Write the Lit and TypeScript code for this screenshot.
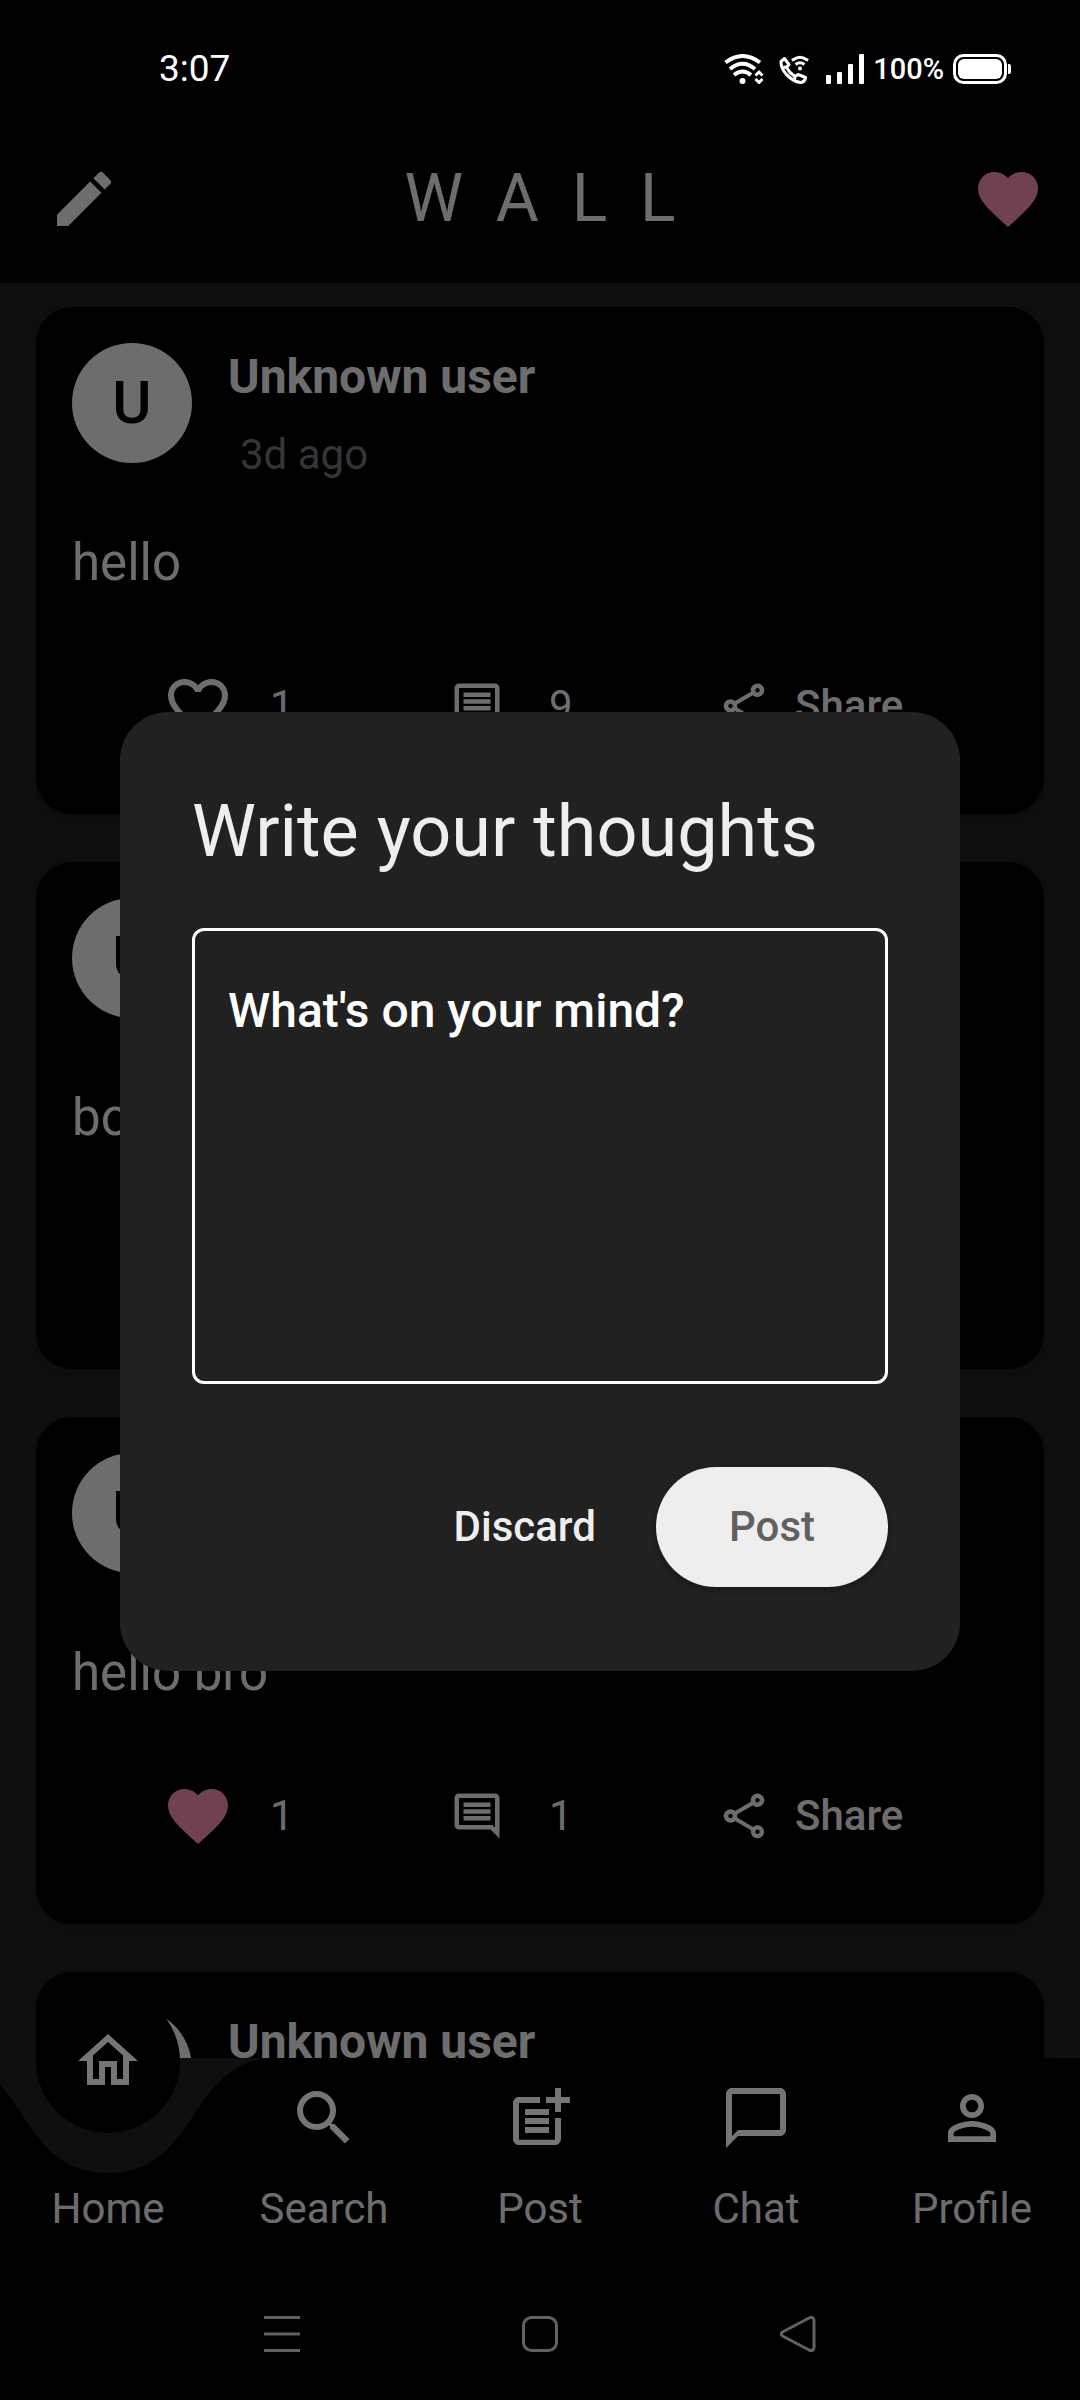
import { LitElement, html, css, svg, nothing } from "lit";
import { customElement, property } from "lit/decorators.js";

const glyphs: Record<string, string> = {
  edit: "M3 17.25V21h3.75L17.81 9.94l-3.75-3.75L3 17.25zM20.71 7.04a1 1 0 0 0 0-1.41l-2.34-2.34a1 1 0 0 0-1.41 0l-1.83 1.83 3.75 3.75 1.83-1.83z",
  heart:
    "M12 21.35l-1.45-1.32C5.4 15.36 2 12.28 2 8.5 2 5.42 4.42 3 7.5 3c1.74 0 3.41.81 4.5 2.09C13.09 3.81 14.76 3 16.5 3 19.58 3 22 5.42 22 8.5c0 3.78-3.4 6.86-8.55 11.54L12 21.35z",
  heartOutline:
    "M16.5 3c-1.74 0-3.41.81-4.5 2.09C10.91 3.81 9.24 3 7.5 3 4.42 3 2 5.42 2 8.5c0 3.78 3.4 6.86 8.55 11.54L12 21.35l1.45-1.32C18.6 15.36 22 12.28 22 8.5 22 5.42 19.58 3 16.5 3zm-4.4 15.55l-.1.1-.1-.1C7.14 14.24 4 11.39 4 8.5 4 6.5 5.5 5 7.5 5c1.54 0 3.04.99 3.57 2.36h1.87C13.46 5.99 14.96 5 16.5 5c2 0 3.5 1.5 3.5 3.5 0 2.89-3.14 5.74-7.9 10.05z",
  comment:
    "M21.99 4c0-1.1-.89-2-1.99-2H4c-1.1 0-2 .9-2 2v12c0 1.1.9 2 2 2h14l4 4-.01-18zM20 4v13.17L18.83 16H4V4h16zM6 12h12v2H6zm0-3h12v2H6zm0-3h12v2H6z",
  share:
    "M18 16.08c-.76 0-1.44.3-1.96.77L8.91 12.7c.05-.23.09-.46.09-.7s-.04-.47-.09-.7l7.05-4.11c.54.5 1.25.81 2.04.81 1.66 0 3-1.34 3-3s-1.34-3-3-3-3 1.34-3 3c0 .24.04.47.09.7L8.04 9.81C7.5 9.31 6.79 9 6 9c-1.66 0-3 1.34-3 3s1.34 3 3 3c.79 0 1.5-.31 2.04-.81l7.12 4.16c-.05.21-.08.43-.08.65 0 1.61 1.31 2.92 2.92 2.92s2.92-1.31 2.92-2.92-1.31-2.92-2.92-2.92zM18 4c.55 0 1 .45 1 1s-.45 1-1 1-1-.45-1-1 .45-1 1-1zM6 13c-.55 0-1-.45-1-1s.45-1 1-1 1 .45 1 1-.45 1-1 1zm12 7.02c-.55 0-1-.45-1-1s.45-1 1-1 1 .45 1 1-.45 1-1 1z",
  home: "M12 5.69l5 4.5V18h-2v-6H9v6H7v-7.81l5-4.5M12 3L2 12h3v8h6v-6h2v6h6v-8h3L12 3z",
  search:
    "M15.5 14h-.79l-.28-.27A6.471 6.471 0 0 0 16 9.5 6.5 6.5 0 1 0 9.5 16c1.61 0 3.09-.59 4.23-1.57l.27.28v.79l5 4.99L20.49 19l-4.99-5zm-6 0C7.01 14 5 11.99 5 9.5S7.01 5 9.5 5 14 7.01 14 9.5 11.99 14 9.5 14z",
  post: "M17 19.22H5V7h7V5H5c-1.1 0-2 .9-2 2v12c0 1.1.9 2 2 2h12c1.1 0 2-.9 2-2v-7h-2v7.22zM19 2h-2v3h-3c.01.01 0 2 0 2h3v2.99c.01.01 2 0 2 0V7h3V5h-3V2zM7 9h8v2H7zM7 12v2h8v-2h-3zM7 15h8v2H7z",
  chat: "M20 2H4c-1.1 0-2 .9-2 2v18l4-4h14c1.1 0 2-.9 2-2V4c0-1.1-.9-2-2-2zm0 14H6l-2 2V4h16v12z",
  profile:
    "M12 5.9a2.1 2.1 0 1 1 0 4.2 2.1 2.1 0 0 1 0-4.2m0 9c2.97 0 6.1 1.46 6.1 2.1v1.1H5.9V17c0-.64 3.13-2.1 6.1-2.1M12 4C9.79 4 8 5.79 8 8s1.79 4 4 4 4-1.79 4-4-1.79-4-4-4zm0 9c-2.67 0-8 1.34-8 4v3h16v-3c0-2.66-5.33-4-8-4z",
};

const icon = (name: string, cls = "") => html`
  <svg class="icon ${cls}" viewBox="0 0 24 24" aria-hidden="true">${svg`<path d=${glyphs[name]}></path>`}</svg>
`;

const shared = css`
  :host {
    font-family: Roboto, "Liberation Sans", sans-serif;
    color: #eeeeee;
  }
  * {
    box-sizing: border-box;
  }
  button,
  textarea {
    font: inherit;
    color: inherit;
    background: none;
    border: 0;
    padding: 0;
    margin: 0;
  }
  .icon {
    display: block;
    width: 72px;
    height: 72px;
    fill: currentColor;
    flex: none;
  }
  .small {
    width: 54px;
    height: 54px;
  }
  .pink {
    color: #f48fb1;
  }
`;

@customElement("status-bar")
class StatusBar extends LitElement {
  static styles = [
    shared,
    css`
      :host {
        display: flex;
        align-items: center;
        height: 115px;
        padding: 22px 69px 0 159px;
        color: #ffffff;
      }
      .time {
        flex: 1;
        font-size: 37px;
        line-height: 44px;
      }
      .tray {
        display: flex;
        align-items: center;
      }
      .tray svg {
        display: block;
        height: 30px;
      }
      .wifi {
        width: 40px;
        margin-right: 15px;
      }
      .call {
        width: 30px;
        margin-right: 17px;
      }
      .signal {
        width: 38px;
        margin-right: 9px;
      }
      .percent {
        font-size: 29px;
        line-height: 34px;
        font-weight: 500;
        margin-right: 9px;
      }
      .battery {
        width: 58px;
      }
    `,
  ];

  render() {
    return html`
      <span class="time">3:07</span>
      <div class="tray">
        <svg class="wifi" viewBox="0 0 40 30" fill="none" stroke="#fff" stroke-width="4">
          <path d="M1.5 8.5Q18.5 -4.500 36 8.5"></path>
          <path d="M6 15Q18.5 4.5 31 15"></path>
          <path d="M10 21Q18.5 14 27 21"></path>
          <circle cx="18.5" cy="27" r="3" fill="#fff" stroke="none"></circle>
          <path stroke-width="3" d="M31.5 21.500l3.500-3.500 3.500 3.500M31.500 25l3.500 3.500 3.500-3.500"></path>
        </svg>
        <svg class="call" viewBox="0 0 30 30" fill="none" stroke="#fff" stroke-width="3" stroke-linejoin="round">
          <path d="M2 7.5L5.5 4.5 10 10.5 7.5 13.5Q10.5 19 16 22.5L19 20.5 26.5 23.5Q26 28 21.5 28.5C11 27 1.5 16 2 7.5zM7.5 13.5L4.5 13M16 22.5L15.5 25.5"></path>
          <path d="M13 6.5Q21 0 29 6.5M16.5 10.5Q21 7 25.5 10.5"></path>
          <circle cx="21" cy="14.5" r="2" fill="#fff" stroke="none"></circle>
        </svg>
        <svg class="signal" viewBox="0 0 38 30" fill="#fff">
          <rect x="0" y="21" width="5" height="9" rx="1"></rect>
          <rect x="11" y="18" width="5" height="12" rx="1"></rect>
          <rect x="22" y="10" width="5" height="20" rx="1"></rect>
          <rect x="33" y="0" width="5" height="30" rx="1"></rect>
        </svg>
        <span class="percent">100%</span>
        <svg class="battery" viewBox="0 0 58 30" fill="#fff">
          <rect x="1.5" y="1.5" width="51" height="27" rx="9" fill="none" stroke="#fff" stroke-width="3"></rect>
          <rect x="5" y="5" width="44" height="20" rx="6"></rect>
          <path d="M55 10h1q2 0 2 2v6q0 2-2 2h-1z"></path>
        </svg>
      </div>
    `;
  }
}

@customElement("post-card")
class PostCard extends LitElement {
  @property() text = "";
  @property({ type: Number }) comments = 0;
  @property({ type: Boolean }) liked = false;

  static styles = [
    shared,
    css`
      :host {
        display: block;
        flex: none;
        background: #000000;
        border-radius: 36px;
        padding: 36px 36px 72px;
        box-shadow: 0 3px 6px rgba(0, 0, 0, 0.25);
      }
      .head {
        display: flex;
        gap: 36px;
      }
      .avatar {
        display: grid;
        place-items: center;
        width: 120px;
        height: 120px;
        border-radius: 50%;
        background: #eeeeee;
        color: #000000;
        font-size: 60px;
        line-height: 72px;
        font-weight: 500;
      }
      .who {
        display: flex;
        flex-direction: column;
        gap: 26px;
        padding-top: 6px;
      }
      .name {
        font-size: 48px;
        line-height: 56px;
        font-weight: 700;
      }
      .ago {
        font-size: 42px;
        line-height: 48px;
        padding-left: 12px;
        color: #757575;
      }
      .body {
        margin: 54px 0 77px;
        font-size: 51px;
        line-height: 60px;
      }
      .actions {
        display: grid;
        grid-template-columns: 288fr 267fr 291fr;
        padding-left: 90px;
        font-size: 42px;
        line-height: 48px;
      }
      .action {
        display: flex;
        align-items: center;
        gap: 36px;
        height: 72px;
      }
      .comment {
        gap: 45px;
      }
      .share {
        gap: 24px;
        font-weight: 500;
      }
    `,
  ];

  render() {
    return html`
      <div class="head">
        <div class="avatar">U</div>
        <div class="who">
          <span class="name">Unknown user</span>
          <span class="ago">3d ago</span>
        </div>
      </div>
      <p class="body">${this.text}</p>
      <div class="actions">
        <button class="action" aria-label="Like">
          ${this.liked ? icon("heart", "pink") : icon("heartOutline")}<span>1</span>
        </button>
        <button class="action comment" aria-label="Comments">
          ${icon("comment", "small")}<span>${this.comments}</span>
        </button>
        <button class="action share">${icon("share", "small")}<span>Share</span></button>
      </div>
    `;
  }
}

@customElement("tab-bar")
class TabBar extends LitElement {
  static styles = [
    shared,
    css`
      :host {
        display: block;
        position: relative;
        background: #212121;
      }
      .shape {
        position: absolute;
        top: 0;
        left: 10%;
        width: 100%;
        height: 100%;
        overflow: visible;
        fill: #000000;
      }
      .tabs {
        position: relative;
        display: grid;
        grid-template-columns: repeat(5, 1fr);
        height: 210px;
      }
      .tab {
        display: flex;
        flex-direction: column;
        align-items: center;
        gap: 31px;
        padding-top: 24px;
        color: #eeeeee;
        text-decoration: none;
        font-size: 42px;
        line-height: 48px;
      }
      .tab .icon {
        color: #ffffff;
      }
      .slot {
        position: relative;
        width: 72px;
        height: 72px;
      }
      .bubble {
        position: absolute;
        left: -36px;
        top: -93px;
        display: grid;
        place-items: center;
        width: 144px;
        height: 144px;
        border-radius: 50%;
        background: #000000;
      }
    `,
  ];

  tabs = [
    ["home", "Home"],
    ["search", "Search"],
    ["post", "Post"],
    ["chat", "Chat"],
    ["profile", "Profile"],
  ];

  render() {
    return html`
      <svg class="shape" aria-hidden="true">
        <path d="M-162 0C-80 6 -90 115 0 115S80 6 162 0H2400V210H-600V0z"></path>
      </svg>
      <nav class="tabs">
        ${this.tabs.map(
          ([name, label], i) => html`
            <a class="tab" href="#${name}" aria-current=${i === 0 ? "page" : nothing}>
              ${i === 0 ? html`<span class="slot"><span class="bubble">${icon(name)}</span></span>` : icon(name)}
              <span>${label}</span>
            </a>
          `,
        )}
      </nav>
    `;
  }
}

@customElement("write-dialog")
class WriteDialog extends LitElement {
  static styles = [
    shared,
    css`
      :host {
        position: absolute;
        inset: 0;
        z-index: 1;
        display: grid;
        align-items: center;
        padding: 115px 120px 132px;
        background: rgba(0, 0, 0, 0.54);
      }
      .dialog {
        display: flex;
        flex-direction: column;
        padding: 78px 72px 84px;
        border-radius: 48px;
        background: #212121;
      }
      .title {
        margin: 0 0 54px;
        font-size: 72px;
        line-height: 84px;
        font-weight: 400;
      }
      .thoughts {
        display: block;
        width: 100%;
        height: 456px;
        padding: 52px 33px;
        border: 3px solid #ffffff;
        border-radius: 12px;
        resize: none;
        outline: none;
        font-size: 48px;
        line-height: 56px;
        font-weight: 500;
      }
      .thoughts::placeholder {
        color: #ffffff;
        opacity: 1;
      }
      .buttons {
        display: flex;
        justify-content: flex-end;
        gap: 24px;
        margin-top: 83px;
        font-size: 42px;
        line-height: 48px;
        font-weight: 500;
      }
      .discard {
        padding: 36px;
      }
      .post {
        min-width: 232px;
        height: 120px;
        padding: 0 72px;
        border-radius: 60px;
        background: #eeeeee;
        color: #616161;
        box-shadow: 0 3px 6px rgba(0, 0, 0, 0.3);
      }
    `,
  ];

  render() {
    return html`
      <section class="dialog" role="dialog" aria-modal="true" aria-labelledby="title">
        <h2 class="title" id="title">Write your thoughts</h2>
        <textarea class="thoughts" aria-label="Your thoughts" placeholder="What's on your mind?"></textarea>
        <div class="buttons">
          <button class="discard">Discard</button>
          <button class="post">Post</button>
        </div>
      </section>
    `;
  }
}

@customElement("app-root")
class AppRoot extends LitElement {
  static styles = [
    shared,
    css`
      :host {
        display: flex;
        flex-direction: column;
        position: relative;
        height: 100vh;
        overflow: hidden;
        background: #000000;
      }
      status-bar,
      .system {
        position: relative;
        z-index: 2;
      }
      .toolbar {
        display: flex;
        align-items: center;
        height: 168px;
        padding: 0 36px 0 48px;
      }
      .heading {
        flex: 1;
        margin: 0;
        padding-right: 12px;
        text-align: center;
        font-size: 66px;
        line-height: 76px;
        font-weight: 400;
        white-space: pre;
      }
      .feed {
        flex: 1;
        min-height: 0;
        display: flex;
        flex-direction: column;
        gap: 48px;
        padding: 24px 36px;
        overflow: hidden;
        background: #212121;
      }
      .system {
        display: flex;
        justify-content: space-between;
        align-items: center;
        height: 132px;
        padding: 0 264px;
      }
      .key {
        display: block;
        width: 36px;
        height: 36px;
        fill: none;
        stroke: #616161;
        stroke-width: 3;
      }
    `,
  ];

  posts = [
    { text: "hello", comments: 9, liked: false },
    { text: "bo", comments: 1, liked: false },
    { text: "hello bro", comments: 1, liked: true },
    { text: "hello", comments: 1, liked: false },
  ];

  render() {
    return html`
      <status-bar></status-bar>
      <header class="toolbar">
        <button aria-label="Write a post">${icon("edit")}</button>
        <h1 class="heading">W  A  L  L</h1>
        <button aria-label="Likes">${icon("heart", "pink")}</button>
      </header>
      <main class="feed">
        ${this.posts.map(
          (p) => html`<post-card .text=${p.text} .comments=${p.comments} .liked=${p.liked}></post-card>`,
        )}
      </main>
      <tab-bar></tab-bar>
      <write-dialog></write-dialog>
      <footer class="system">
        <button aria-label="Recent apps">
          <svg class="key" viewBox="0 0 36 36"><path d="M0 1.5H36M0 18H36M0 34.5H36"></path></svg>
        </button>
        <button aria-label="Home screen">
          <svg class="key" viewBox="0 0 36 36"><rect x="1.5" y="1.5" width="33" height="33" rx="8"></rect></svg>
        </button>
        <button aria-label="Back">
          <svg class="key" viewBox="0 0 36 36" stroke-width="2" stroke-linejoin="round">
            <path d="M2.5 16L29 2Q34 0 34 5V31Q34 36 29 34L2.5 20Q0 18 2.5 16z"></path>
          </svg>
        </button>
      </footer>
    `;
  }
}
